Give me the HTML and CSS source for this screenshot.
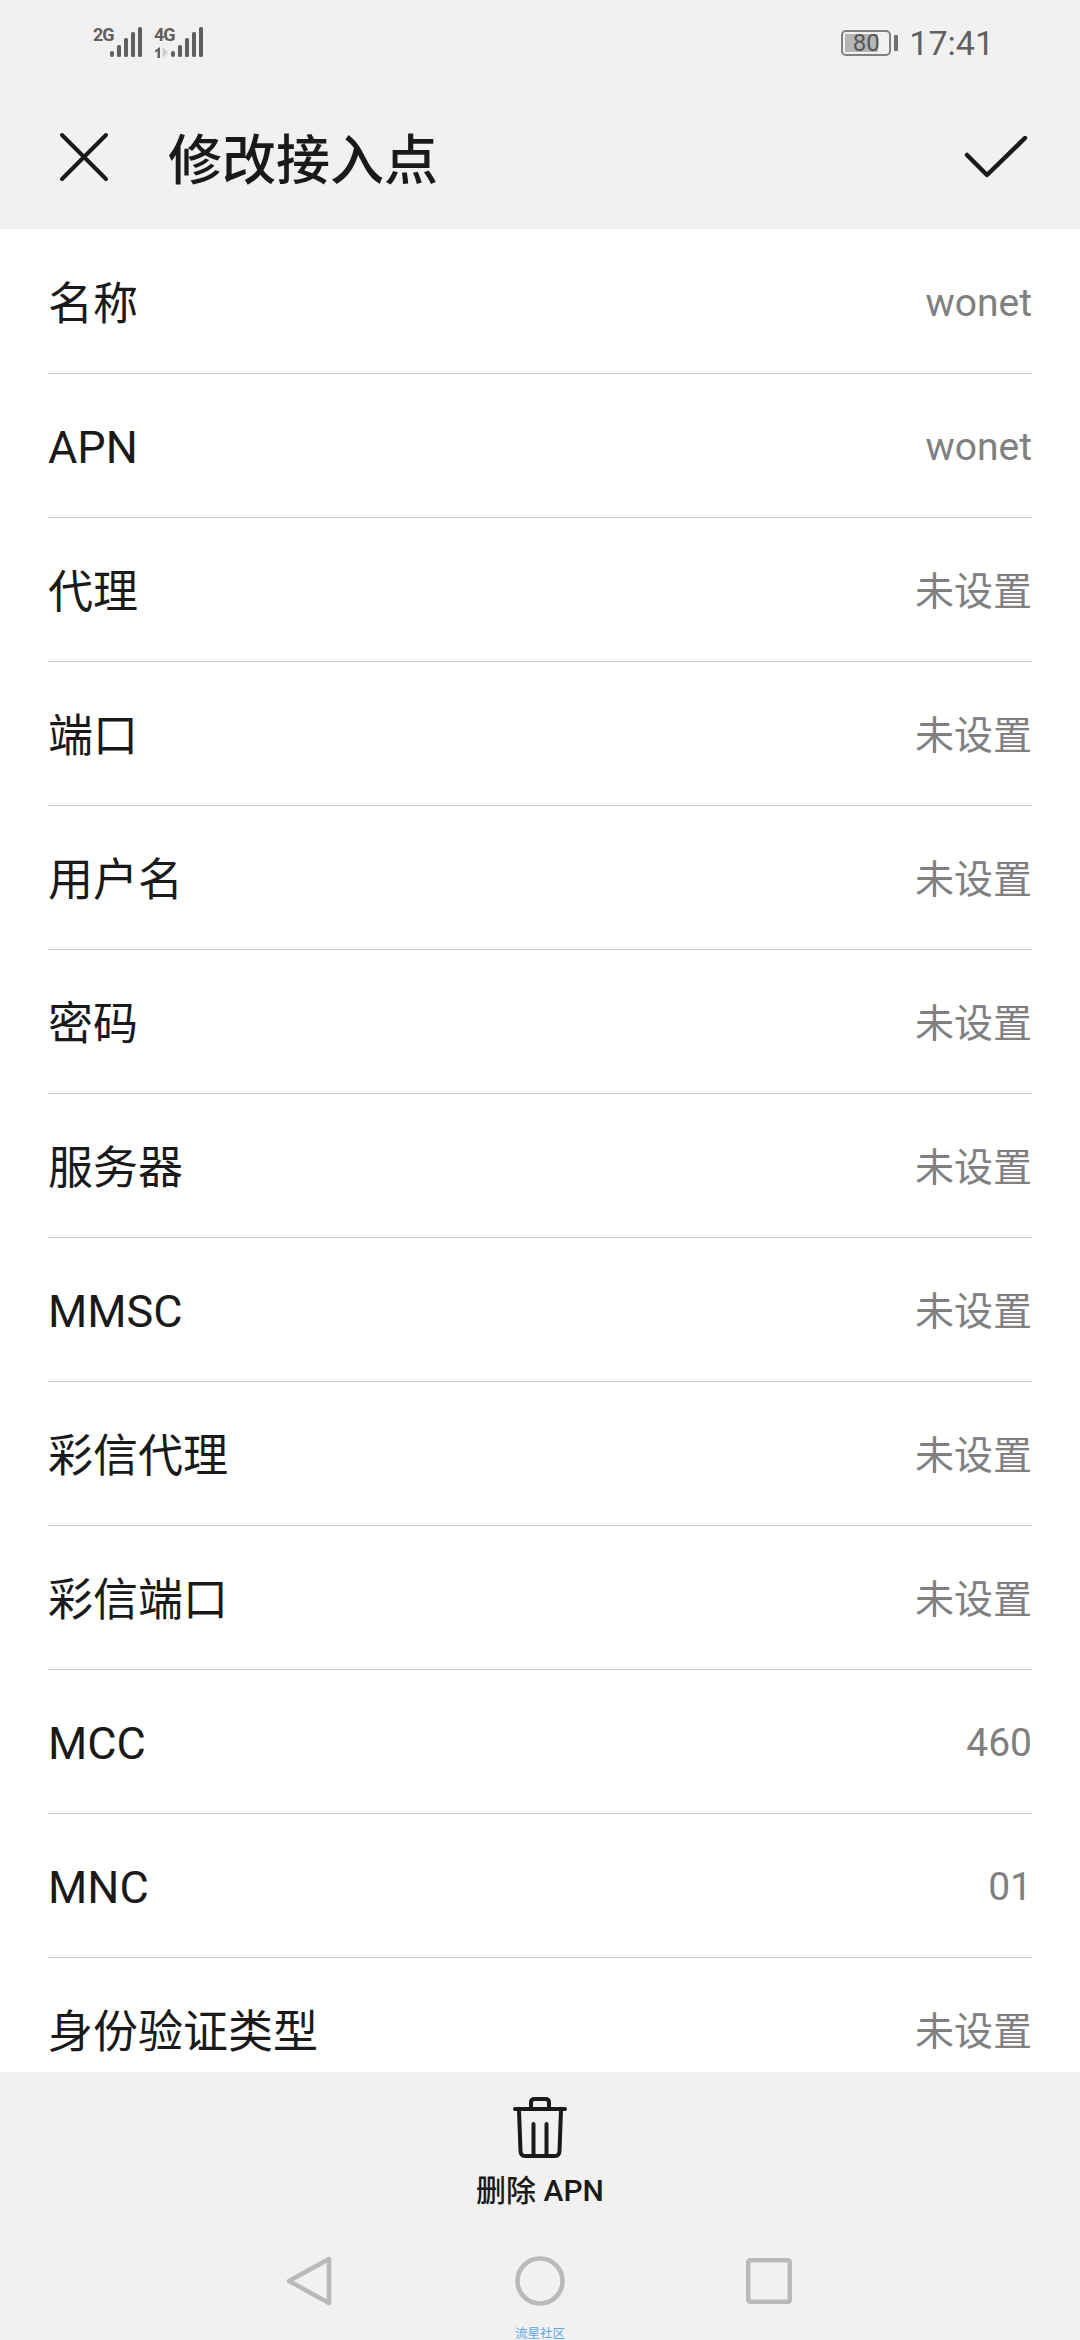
FILE: index.html
```html
<!DOCTYPE html>
<html lang="zh-CN">
<head>
<meta charset="utf-8">
<title>修改接入点</title>
<link rel="stylesheet" href="styles.css">
</head>
<body>
<div class="screen">
  <div class="status">
    <div class="signal">
      <div class="sim"><span class="net">2G</span>
        <svg class="bars" width="32" height="31" viewBox="0 0 32 31"><g fill="#606060"><rect x="0" y="24" width="4" height="6" rx="2"/><rect x="7" y="18" width="4" height="12" rx="1.5"/><rect x="14" y="11" width="4" height="19" rx="1.5"/><rect x="21" y="5" width="4" height="25" rx="1.5"/><rect x="28" y="0" width="4" height="30" rx="1.5"/></g></svg>
      </div>
      <div class="sim sim2"><span class="net">4G</span>
        <svg class="arrows" width="15" height="11" viewBox="0 0 15 11"><path d="M6 0v11H3.5V4L1 5.5V3.500z" fill="#606060"/><path d="M8.500 0v11L14 5.500z" fill="#cfcfcf"/></svg>
        <svg class="bars" width="32" height="31" viewBox="0 0 32 31"><g fill="#606060"><rect x="0" y="24" width="4" height="6" rx="2"/><rect x="7" y="18" width="4" height="12" rx="1.5"/><rect x="14" y="11" width="4" height="19" rx="1.5"/><rect x="21" y="5" width="4" height="25" rx="1.500"/><rect x="28" y="0" width="4" height="30" rx="1.5"/></g></svg>
      </div>
    </div>
    <div class="status-right">
      <div class="battery"><div class="battery-fill"></div><span class="battery-text">80</span></div>
      <div class="battery-tip"></div>
      <span class="clock">17:41</span>
    </div>
  </div>
  <header class="appbar">
    <svg class="icon-close" width="52" height="52" viewBox="0 0 52 52"><path d="M4 4l44 44M48 4L4 48" stroke="#1a1a1a" stroke-width="4" stroke-linecap="round" fill="none"/></svg>
    <h1 class="title">修改接入点</h1>
    <svg class="icon-check" width="64" height="44" viewBox="0 0 64 44"><path d="M3 19l20 20L61 2" stroke="#1a1a1a" stroke-width="4.500" stroke-linecap="round" stroke-linejoin="round" fill="none"/></svg>
  </header>
  <main class="list">
    <div class="row"><span class="label">名称</span><span class="value latin">wonet</span></div>
    <div class="row"><span class="label latin">APN</span><span class="value latin">wonet</span></div>
    <div class="row"><span class="label">代理</span><span class="value">未设置</span></div>
    <div class="row"><span class="label">端口</span><span class="value">未设置</span></div>
    <div class="row"><span class="label">用户名</span><span class="value">未设置</span></div>
    <div class="row"><span class="label">密码</span><span class="value">未设置</span></div>
    <div class="row"><span class="label">服务器</span><span class="value">未设置</span></div>
    <div class="row"><span class="label latin">MMSC</span><span class="value">未设置</span></div>
    <div class="row"><span class="label">彩信代理</span><span class="value">未设置</span></div>
    <div class="row"><span class="label">彩信端口</span><span class="value">未设置</span></div>
    <div class="row"><span class="label latin">MCC</span><span class="value latin">460</span></div>
    <div class="row"><span class="label latin">MNC</span><span class="value latin">01</span></div>
    <div class="row"><span class="label">身份验证类型</span><span class="value">未设置</span></div>
  </main>
  <div class="action">
    <svg class="icon-trash" width="54" height="62" viewBox="0 0 54 62"><g fill="none" stroke="#1a1a1a" stroke-width="4" stroke-linecap="round" stroke-linejoin="round"><path d="M2 13h50"/><path d="M18 12V6.500Q18 3 21.500 3h11Q36 3 36 6.500V12"/><path d="M6 14l1.500 41Q7.700 60 12 60h30Q46.300 60 46.500 55L48 14"/><path d="M20.500 28v31M33.500 28v31"/></g></svg>
    <span class="action-label">删除 APN</span>
  </div>
  <nav class="navbar">
    <svg class="nav-back" width="46" height="50" viewBox="0 0 46 50"><path d="M43 3v44L3 25z" fill="none" stroke="#b9b9b9" stroke-width="4.500" stroke-linejoin="round"/></svg>
    <svg class="nav-home" width="50" height="50" viewBox="0 0 50 50"><circle cx="25" cy="25" r="22.500" fill="none" stroke="#b9b9b9" stroke-width="4.500"/></svg>
    <svg class="nav-recent" width="46" height="46" viewBox="0 0 46 46"><rect x="2.200" y="2.200" width="41.600" height="41.600" rx="2" fill="none" stroke="#b9b9b9" stroke-width="4.500"/></svg>
    <span class="watermark">流星社区</span>
  </nav>
</div>
</body>
</html>
```
FILE: styles.css
```css
* { box-sizing: border-box; }
html, body { margin: 0; padding: 0; }
body {
  width: 1080px;
  height: 2340px;
  background: #f1f1f1;
  font-family: Roboto, "Noto Sans CJK SC", sans-serif;
  overflow: hidden;
}
.screen {
  display: flex;
  flex-direction: column;
  width: 1080px;
  height: 2340px;
  background: #f1f1f1;
}
.status {
  flex: none;
  height: 84px;
  display: flex;
  justify-content: space-between;
  align-items: flex-start;
  padding: 27px 86px 0 93px;
  color: #606060;
}
.signal { display: flex; gap: 12px; }
.sim { position: relative; display: flex; width: 49px; height: 31px; justify-content: flex-end; }
.net {
  position: absolute;
  left: 0;
  top: -1px;
  font: 700 18px/18px "Liberation Sans Narrow", Roboto, sans-serif;
  letter-spacing: -1px;
  color: #606060;
}
.arrows { position: absolute; left: 0; top: 20px; }
.status-right { display: flex; align-items: center; height: 28px; margin-top: 2px; }
.battery {
  position: relative;
  width: 50px;
  height: 26px;
  border: 2px solid #808080;
  border-radius: 5px;
  padding: 1px;
  display: flex;
  align-items: center;
  justify-content: center;
}
.battery-fill {
  position: absolute;
  left: 2px;
  top: 2px;
  bottom: 2px;
  width: 33px;
  background: #b5b5b5;
}
.battery-text { position: relative; font-size: 24px; line-height: 22px; color: #555; }
.battery-tip { flex: none; width: 4px; height: 16px; margin: 0 11px 0 3px; border-radius: 1px; background: #707070; }
.clock { font-size: 34px; line-height: 28px; color: #606060; }
.appbar {
  flex: none;
  height: 145px;
  display: flex;
  align-items: flex-start;
  padding: 47px 52px 0 58px;
}
.icon-close { flex: none; }
.title {
  margin: -4px 0 0 58px;
  flex: 1;
  font-size: 54px;
  line-height: 60px;
  font-weight: 500;
  color: #1a1a1a;
  font-family: "Noto Sans CJK SC", sans-serif;
}
.icon-check { flex: none; margin-top: 5px; }
.list { flex: 1; min-height: 0; overflow: hidden; background: #fff; padding: 1px 48px 0; }
.row {
  height: 144px;
  display: flex;
  align-items: center;
  justify-content: space-between;
  padding-bottom: 3px;
  border-bottom: 1px solid #cbcbcb;
}
.label { font-size: 45px; color: #1a1a1a; }
.value { font-size: 39px; color: #808080; }
.latin { padding-top: 6px; }
.action {
  flex: none;
  height: 138px;
  display: flex;
  flex-direction: column;
  align-items: center;
  padding-top: 24px;
}
.action-label { margin-top: 14px; font-size: 30px; line-height: 38px; font-weight: 500; color: #1a1a1a; }
.navbar {
  flex: none;
  position: relative;
  height: 130px;
  display: flex;
  align-items: flex-start;
  padding: 46px 0 0 286px;
}
.nav-back { margin-right: 183px; }
.nav-home { margin-right: 181px; }
.nav-recent { margin-top: 2px; }
.watermark {
  position: absolute;
  left: 515px;
  bottom: -2px;
  font-size: 12.500px;
  line-height: 16px;
  color: #5aa8e6;
}
```
